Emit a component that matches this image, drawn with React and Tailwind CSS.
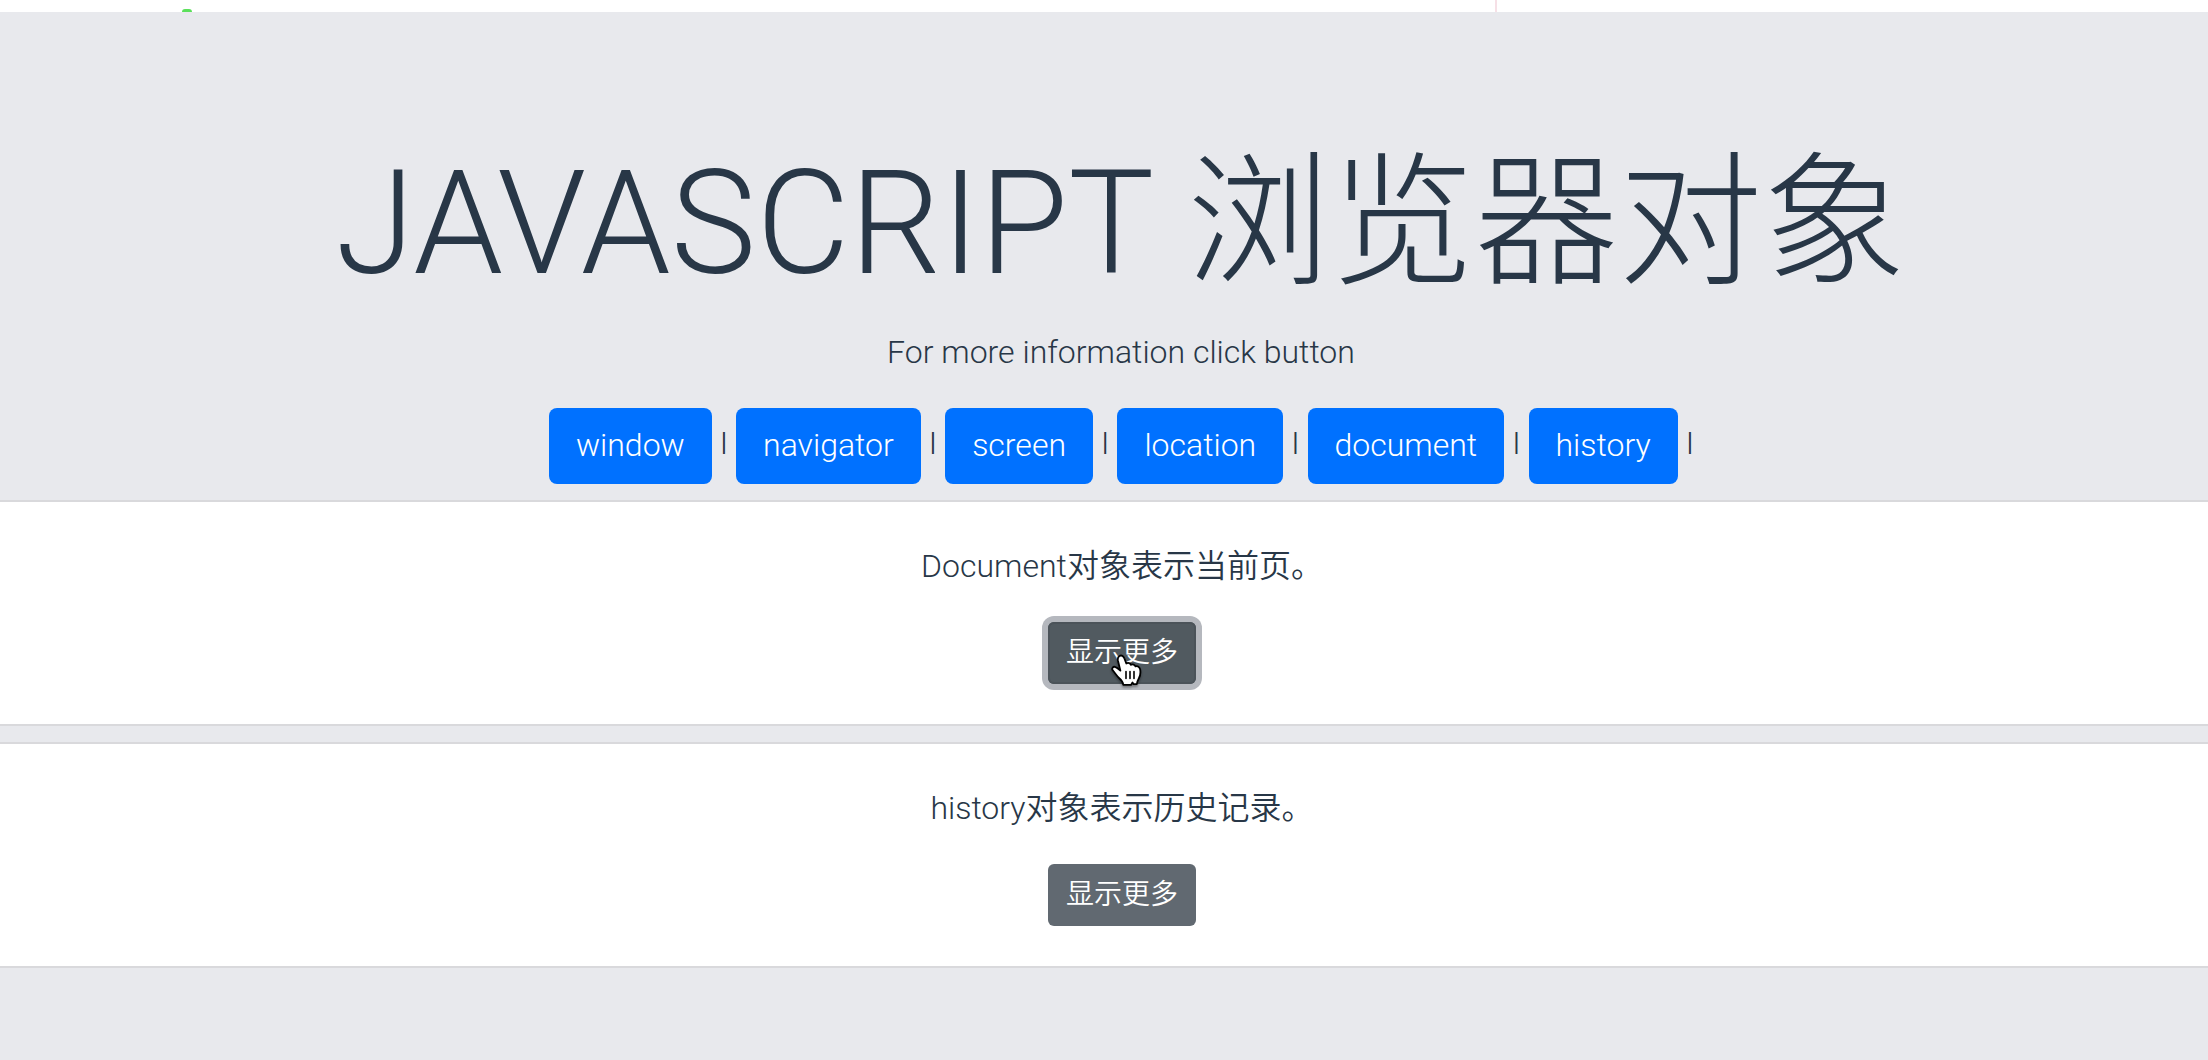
const objects = ["window", "navigator", "screen", "location", "document", "history"];

const cards = [
  { id: "document", text: "Document对象表示当前页。", active: true },
  { id: "history", text: "history对象表示历史记录。", active: false },
];

function PointerHand() {
  return (
    <svg
      className="pointer-events-none absolute left-[62px] top-[31px] h-9 w-9 drop-shadow-[0_2px_1px_rgba(0,0,0,0.35)]"
      viewBox="0 0 36 36"
      aria-hidden="true"
    >
      <path
        d="M9.500 3C11.500 1.800 13.500 3 14.300 5.300L16.300 10.500C18 9.300 20.300 10 21 11.800C22.700 10.800 24.800 11.600 25.500 13.400C27.600 12.600 29.700 13.800 30.200 16.500C30.700 19.500 30.200 23 28.800 25.500C27.700 27.500 27 29 26.800 31.200L23.600 31.200L22.500 29.400L21.200 31.800H13.300C13 29 11.500 27.200 9 25C6.800 23 5 20 2.600 17.200C1.400 15.600 3 13.400 5 13.800C7 14.300 8.600 15.800 10.400 17.600L7.900 7.500C7.500 5.500 7.900 4 9.500 3Z"
        fill="#fff"
        stroke="#000"
        strokeWidth="1.8"
        strokeLinejoin="round"
      />
      <path d="M16 18.500V25.500M20 18.500V25.500M24 18.500V25.500" stroke="#000" strokeWidth="1.6" strokeLinecap="round" />
    </svg>
  );
}

function Card({ text, active }) {
  return (
    <section className="flex flex-col items-center border-y-2 border-[#d9d9dc] bg-white py-10 pl-9">
      <p className="mb-8 text-[32px] leading-12 font-[350]">{text}</p>
      <div className="relative">
        <button
          type="button"
          className={
            active
              ? "h-[62px] cursor-pointer rounded-md bg-[#515a60] px-[18px] text-[28px] leading-[42px] font-[350] text-white shadow-[inset_0_0_0_2px_#4b5359] ring-[6px] ring-[#b5b8be]"
              : "h-[62px] cursor-pointer rounded-md bg-[#616971] px-[18px] text-[28px] leading-[42px] font-[350] text-white"
          }
        >
          显示更多
        </button>
        {active && <PointerHand />}
      </div>
    </section>
  );
}

export default function App() {
  return (
    <div className="flex min-h-screen flex-col bg-[#e8e9ed] font-[Roboto,'Noto_Sans_CJK_SC',sans-serif] font-light text-[#283747]">
      <div className="flex h-3 items-end bg-white">
        <div className="ml-[182px] h-[3px] w-[10px] rounded-t-full bg-[#5be05b]" />
        <div className="ml-[1303px] h-3 w-[2px] bg-[#f6e0e6]" />
      </div>
      <header className="flex flex-col items-center pt-[126px] pb-4 pl-[34px]">
        <h1 className="text-[144px] leading-[172px] whitespace-nowrap">JAVASCRIPT 浏览器对象</h1>
        <p className="mt-[18px] text-[32px] leading-12">For more information click button</p>
        <nav className="mt-8 flex items-center gap-[9px]">
          {objects.map((name) => (
            <div key={name} className="flex items-center gap-[9px]">
              <button type="button" className="h-[76px] cursor-pointer rounded-lg bg-[#0071ff] px-[27px] pb-[2px] text-[32px] text-white">
                {name}
              </button>
              <span className="pb-2 text-[26px] leading-8 font-normal">|</span>
            </div>
          ))}
        </nav>
      </header>
      <main className="flex flex-col gap-4">
        {cards.map((c) => (
          <Card key={c.id} text={c.text} active={c.active} />
        ))}
      </main>
    </div>
  );
}
